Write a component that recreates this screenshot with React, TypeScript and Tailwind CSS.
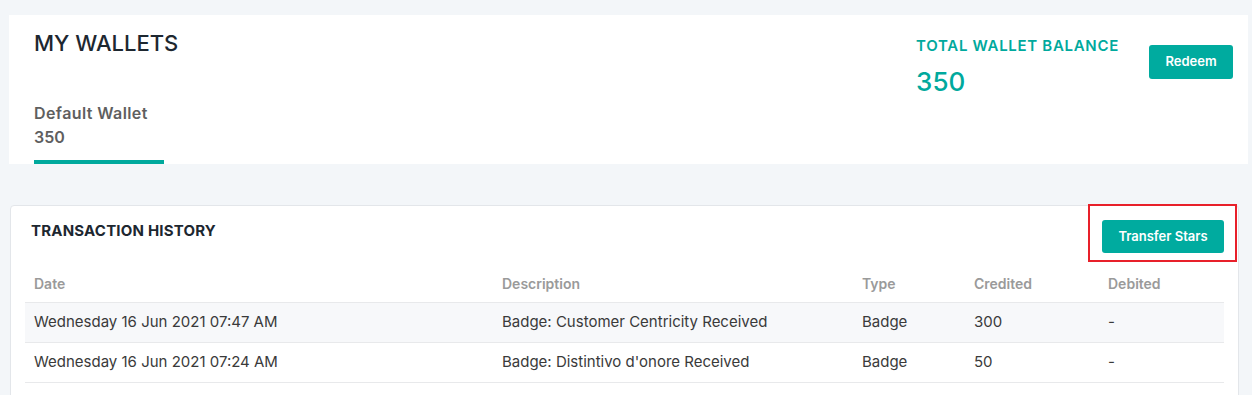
import React from "react";

const rows = [
  {
    date: "Wednesday 16 Jun 2021 07:47 AM",
    description: "Badge: Customer Centricity Received",
    type: "Badge",
    credited: "300",
    debited: "-",
  },
  {
    date: "Wednesday 16 Jun 2021 07:24 AM",
    description: "Badge: Distintivo d'onore Received",
    type: "Badge",
    credited: "50",
    debited: "-",
  },
];

const App = () => {
  return (
    <div
      className="min-h-[395px] bg-[#f3f6f9] pt-[15px] pl-[9px] pr-[4px] pb-4"
      style={{ fontFamily: 'Inter, "Open Sans", "Liberation Sans", sans-serif' }}
    >
      {/* wallets summary */}
      <div className="bg-white h-[149px] flex justify-between pl-[25px] pr-[15px]">
        <div className="flex flex-col">
          <h1 className="text-[22px] leading-[28px] mt-[14px] font-medium text-[#1d2730]">
            MY WALLETS
          </h1>
          <div className="mt-auto w-[130px] border-b-4 border-[#00a99d] pb-[11px]">
            <div className="text-[16px] leading-[24px] font-semibold text-[#5f5f5f] tracking-[0.4px]">
              Default Wallet
            </div>
            <div className="text-[16px] leading-[24px] font-semibold text-[#5f5f5f]">
              350
            </div>
          </div>
        </div>

        <div className="flex items-start">
          <div className="mt-[21px]">
            <div className="text-[15px] leading-[20px] font-semibold text-[#00a99d] tracking-[0.7px]">
              TOTAL WALLET BALANCE
            </div>
            <div className="text-[26px] leading-[32px] font-medium text-[#00a99d] mt-[10px]">
              350
            </div>
          </div>
          <button className="ml-[30px] mt-[30px] w-[84px] h-[34px] rounded-[3px] bg-[#00ab9f] text-white text-[13px] font-semibold">
            Redeem
          </button>
        </div>
      </div>

      {/* transaction history */}
      <div className="mt-[41px] mr-[9px] ml-[1px] bg-white border border-[#e3e6ea] rounded-[4px] px-[14px] pb-4">
        <div className="flex justify-between items-start">
          <h2 className="mt-[14px] ml-[6px] text-[15px] leading-[22px] font-bold text-[#1d2730] tracking-[0.2px]">
            TRANSACTION HISTORY
          </h2>
          <div className="-mr-[13px] -mt-[2px] border-2 border-[#e8202a] pl-[12px] pr-[11px] pt-[14px] pb-[7px]">
            <button className="w-[122px] h-[33px] rounded-[3px] bg-[#00ab9f] text-white text-[13px] font-semibold">
              Transfer Stars
            </button>
          </div>
        </div>

        <table className="w-full text-left border-collapse">
          <thead>
            <tr className="h-[40px] border-b border-[#e8e9eb]">
              <th className="w-[468px] pl-[9px] pt-[4px] text-[14px] font-semibold text-[#9a9a9a]">Date</th>
              <th className="w-[360px] pl-[9px] pt-[4px] text-[14px] font-semibold text-[#9a9a9a]">Description</th>
              <th className="w-[112px] pl-[9px] pt-[4px] text-[14px] font-semibold text-[#9a9a9a]">Type</th>
              <th className="w-[134px] pl-[9px] pt-[4px] text-[14px] font-semibold text-[#9a9a9a]">Credited</th>
              <th className="pl-[9px] pt-[4px] text-[14px] font-semibold text-[#9a9a9a]">Debited</th>
            </tr>
          </thead>
          <tbody>
            {rows.map((r, i) => (
              <tr
                key={i}
                className={`h-[40px] border-b border-[#e8e9eb] text-[15px] text-[#3a3a3a] ${
                  i % 2 === 0 ? "bg-[#f7f8fa]" : "bg-white"
                }`}
              >
                <td className="pl-[9px]">{r.date}</td>
                <td className="pl-[9px]">{r.description}</td>
                <td className="pl-[9px]">{r.type}</td>
                <td className="pl-[9px]">{r.credited}</td>
                <td className="pl-[9px]">{r.debited}</td>
              </tr>
            ))}
          </tbody>
        </table>
      </div>
    </div>
  );
};

export default App;
